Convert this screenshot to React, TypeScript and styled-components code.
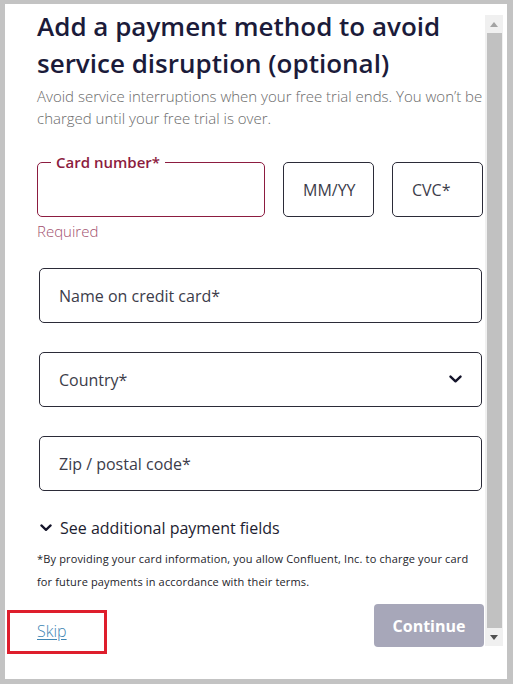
import React from "react";
import styled, { createGlobalStyle } from "styled-components";

const Global = createGlobalStyle`
  html, body { margin: 0; padding: 0; background: #c3c3c3; }
  body { font-family: "Open Sans", "Noto Sans", sans-serif; }
  * { box-sizing: border-box; }
`;

const Frame = styled.div`
  margin: 4px 6px 5px 5px;
  height: 675px;
  background: #ffffff;
  display: flex;
  align-items: flex-start;
`;

const Content = styled.div`
  flex: 1;
  min-width: 0;
  display: flex;
  flex-direction: column;
`;

const Section = styled.div`
  padding: 0 1px 0 32px;
`;

const Title = styled.h1`
  margin: 4px 0 0 0;
  font-size: 26px;
  line-height: 37px;
  font-weight: 600;
  color: #1b1b3a;
  letter-spacing: 0px;
`;

const Subtitle = styled.p`
  margin: 3px 0 0 0;
  font-size: 15px;
  line-height: 22px;
  font-weight: 300;
  color: #6a6a6a;
`;

const CardRow = styled.div`
  margin-top: 33px;
  display: grid;
  grid-template-columns: 228px 91px 91px;
  column-gap: 18px;
`;

const Field = styled.div<{ $error?: boolean }>`
  position: relative;
  height: 55px;
  border: 1px solid ${(p) => (p.$error ? "#8c1c40" : "#2b2b38")};
  border-radius: 5px;
  display: flex;
  align-items: center;
  justify-content: space-between;
  padding: 0 19px 0 19px;
  font-size: 16px;
  color: #3c3c4a;
`;

const Legend = styled.span`
  position: absolute;
  top: -12px;
  left: 13px;
  padding: 0 5px;
  background: #ffffff;
  font-size: 15px;
  line-height: 22px;
  font-weight: 600;
  color: #8c1c40;
`;

const Helper = styled.div`
  margin-top: 4px;
  font-size: 15px;
  line-height: 20px;
  font-weight: 300;
  color: #a2506e;
`;

const Stack = styled.div`
  margin: 27px 2px 0 2px;
  display: flex;
  flex-direction: column;
  gap: 29px;
`;

const Toggle = styled.div`
  margin-top: 26px;
  display: flex;
  align-items: center;
  gap: 8px;
  padding-left: 3px;
  font-size: 16px;
  font-weight: 500;
  color: #1d1d30;
`;

const Disclaimer = styled.p`
  margin: 8px 0 0 0;
  max-width: 440px;
  font-size: 11px;
  line-height: 23px;
  font-weight: 500;
  letter-spacing: 0.15px;
  color: #1d1d2a;
`;

const Footer = styled.div`
  margin-top: 11px;
  display: flex;
  justify-content: space-between;
  align-items: flex-start;
`;

const SkipBox = styled.div`
  margin: 6px 0 0 2px;
  width: 100px;
  height: 44px;
  border: 3px solid #de1e2c;
  display: flex;
  align-items: center;
  padding-left: 27px;
`;

const SkipLink = styled.a`
  font-size: 16px;
  font-weight: 300;
  color: #3f86b4;
  text-decoration: underline;
  text-underline-offset: 2px;
  margin-top: -2px;
`;

const Continue = styled.button`
  width: 110px;
  height: 43px;
  margin-right: 1px;
  border: none;
  border-radius: 4px;
  background: #a7a7b9;
  color: #ffffff;
  font-family: inherit;
  font-size: 16px;
  font-weight: 700;
`;

const Scrollbar = styled.div`
  margin: 11px 4px 0 0;
  width: 18px;
  height: 631px;
  background: #f0f0f0;
  display: flex;
  flex-direction: column;
  align-items: center;
`;

const Arrow = styled.div`
  height: 18px;
  width: 18px;
  display: flex;
  align-items: center;
  justify-content: center;
`;

const Thumb = styled.div`
  flex: 1;
  width: 15px;
  background: #c1c1c1;
`;

const Chevron = ({ size = 13 }: { size?: number }) => (
  <svg width={size} height={size * 0.62} viewBox="0 0 13 8" fill="none">
    <path d="M1.5 1.5 L6.5 6.3 L11.5 1.5" stroke="#14142a" strokeWidth="2.4" strokeLinecap="round" strokeLinejoin="round" />
  </svg>
);

export default function App() {
  return (
    <>
      <Global />
      <Frame>
        <Content>
          <Section>
            <Title>
              Add a payment method to avoid
              <br />
              service disruption (optional)
            </Title>
            <Subtitle>
              Avoid service interruptions when your free trial ends. You won’t be charged until your free trial is over.
            </Subtitle>
            <CardRow>
              <Field $error>
                <Legend>Card number*</Legend>
              </Field>
              <Field>MM/YY</Field>
              <Field>CVC*</Field>
            </CardRow>
            <Helper>Required</Helper>
            <Stack>
              <Field>Name on credit card*</Field>
              <Field>
                Country*
                <Chevron />
              </Field>
              <Field>Zip / postal code*</Field>
            </Stack>
            <Toggle>
              <Chevron size={12} />
              See additional payment fields
            </Toggle>
            <Disclaimer>
              *By providing your card information, you allow Confluent, Inc. to charge your card for future payments in accordance with their terms.
            </Disclaimer>
          </Section>
          <Footer>
            <SkipBox>
              <SkipLink href="#">Skip</SkipLink>
            </SkipBox>
            <Continue>Continue</Continue>
          </Footer>
        </Content>
        <Scrollbar>
          <Arrow>
            <svg width="8" height="5" viewBox="0 0 8 5">
              <path d="M0 5 L4 0 L8 5 Z" fill="#a3a3a3" />
            </svg>
          </Arrow>
          <Thumb />
          <Arrow>
            <svg width="8" height="5" viewBox="0 0 8 5">
              <path d="M0 0 L4 5 L8 0 Z" fill="#505050" />
            </svg>
          </Arrow>
        </Scrollbar>
      </Frame>
    </>
  );
}
